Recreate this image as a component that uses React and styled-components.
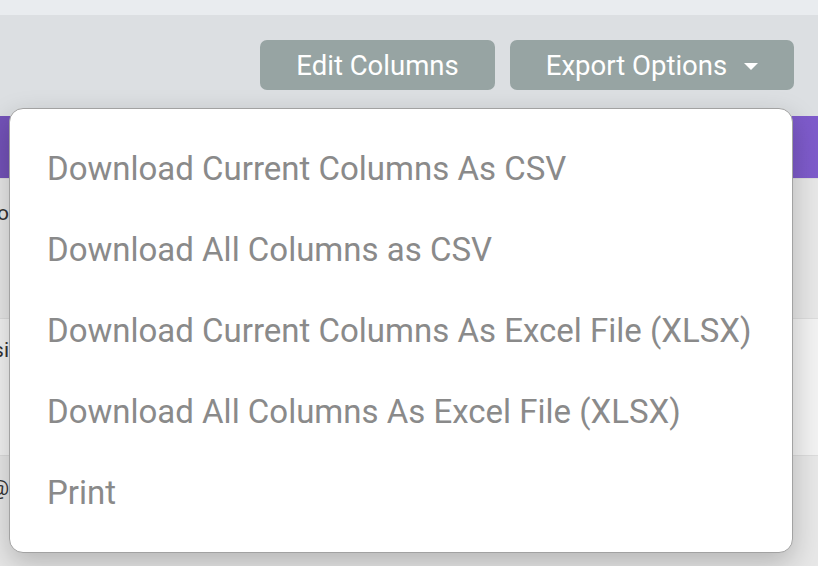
import React from 'react';
import styled, { createGlobalStyle } from 'styled-components';

const GlobalStyle = createGlobalStyle`
  html, body {
    margin: 0;
    padding: 0;
    font-family: Roboto, "Liberation Sans", sans-serif;
  }
  #root {
    width: 818px;
    height: 566px;
    overflow: hidden;
  }
`;

const Page = styled.div`
  position: relative;
  width: 818px;
  height: 566px;
  display: flex;
  flex-direction: column;
  background: #e6e6e6;
`;

const TopStrip = styled.div`
  height: 15px;
  background: #e9ecef;
`;

const Toolbar = styled.div`
  height: 101px;
  box-sizing: border-box;
  background: #dcdfe2;
  display: flex;
  justify-content: flex-end;
  align-items: flex-start;
  gap: 15px;
  padding: 25px 24px 0 0;
`;

const ToolButton = styled.button`
  height: 50px;
  width: ${props => props.$width}px;
  border: none;
  border-radius: 7px;
  background: #97a4a3;
  color: #fff;
  font-family: Roboto, "Liberation Sans", sans-serif;
  font-size: 27.5px;
  display: flex;
  align-items: center;
  justify-content: center;
  gap: 17px;
  padding: 0;
`;

const Caret = styled.span`
  width: 0;
  height: 0;
  border-left: 7px solid transparent;
  border-right: 7px solid transparent;
  border-top: 7px solid #fff;
  margin-top: 2px;
`;

const TableHead = styled.div`
  height: 62px;
  background: linear-gradient(90deg, #7352b8, #7e5bcb);
`;

const Row = styled.div`
  height: ${props => props.$height}px;
  background: ${props => (props.$alt ? '#f2f2f2' : '#e7e7e7')};
  border-top: 1px solid #dcdcdc;
  display: flex;
  box-sizing: border-box;
  padding-top: ${props => props.$top}px;
`;

const Cell = styled.div`
  width: 9px;
  overflow: hidden;
  display: flex;
  justify-content: flex-end;
  white-space: nowrap;
  font-size: 21px;
  color: #333;
  height: 26px;
`;

const Menu = styled.ul`
  position: absolute;
  left: 9px;
  top: 108px;
  width: 784px;
  height: 445px;
  box-sizing: border-box;
  margin: 0;
  padding: 19px 0 20px;
  list-style: none;
  background: #fff;
  border: 1px solid #a2a2a2;
  border-radius: 14px;
  box-shadow: 0 10px 28px rgba(0, 0, 0, 0.22);
`;

const MenuItem = styled.li`
  height: 81px;
  display: flex;
  align-items: center;
  padding-left: 37px;
  font-size: 33px;
  color: #8a8a8a;
  white-space: nowrap;
`;

const items = [
  'Download Current Columns As CSV',
  'Download All Columns as CSV',
  'Download Current Columns As Excel File (XLSX)',
  'Download All Columns As Excel File (XLSX)',
  'Print',
];

export default function App() {
  return (
    <Page>
      <GlobalStyle />
      <TopStrip />
      <Toolbar>
        <ToolButton $width={235}>Edit Columns</ToolButton>
        <ToolButton $width={284}>
          Export Options
          <Caret />
        </ToolButton>
      </Toolbar>
      <TableHead />
      <Row $height={140} $top={22}>
        <Cell>Info</Cell>
      </Row>
      <Row $height={137} $alt $top={19}>
        <Cell>Desi</Cell>
      </Row>
      <Row $height={111} $top={20}>
        <Cell>user@</Cell>
      </Row>
      <Menu>
        {items.map(item => (
          <MenuItem key={item}>{item}</MenuItem>
        ))}
      </Menu>
    </Page>
  );
}
